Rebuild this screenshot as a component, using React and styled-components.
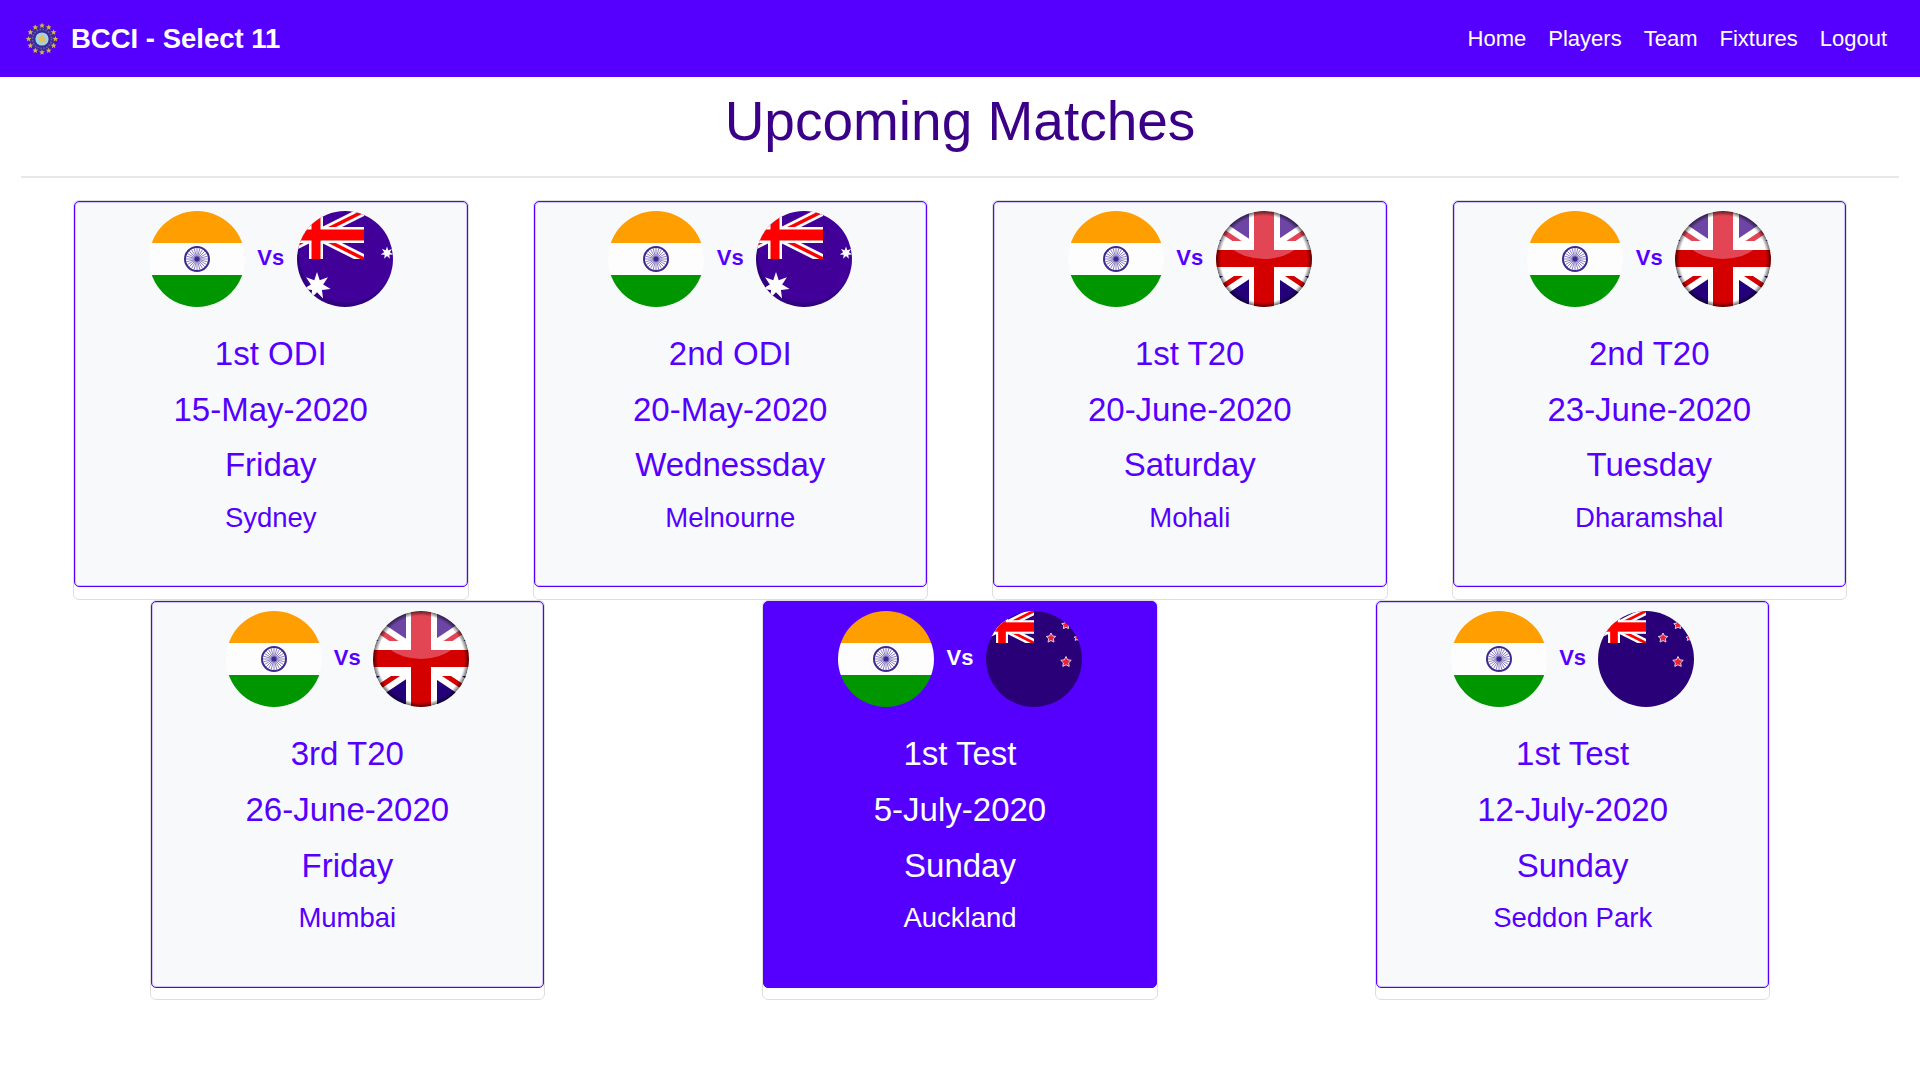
import React from "react";
import styled, { createGlobalStyle } from "styled-components";

const Global = createGlobalStyle`
  html, body { margin: 0; padding: 0; background: #fff; }
  body { font-family: "Liberation Sans", Arial, sans-serif; }
`;
const Nav = styled.nav`
  height: 77px; background: #5500ff; display: flex; align-items: center;
  justify-content: space-between; padding: 0 33px 0 26px; box-sizing: border-box;
`;
const Brand = styled.a`
  display: flex; align-items: center; gap: 13px; color: #fff; font-weight: 700; font-size: 27.5px;
`;
const Links = styled.div`display: flex; gap: 22px;`;
const Link = styled.a`color: #fff; font-size: 22px;`;
const Title = styled.h1`
  margin: 0; height: 99px; box-sizing: border-box; padding-top: 10.5px; text-align: center;
  font-weight: 400; font-size: 55px; line-height: 67px; color: #3a0088;
`;
const Rule = styled.hr`margin: 0 21px; border: 0; border-top: 2px solid #e8e8e8;`;
const Grid = styled.div`padding: 21.8px 41px 0;`;
const Row = styled.div`display: grid; grid-template-columns: repeat(${p => p.$cols}, 1fr);`;
const Cell = styled.div`display: flex; justify-content: center;`;
const Outer = styled.div`
  width: 395.5px; height: 400.3px; box-sizing: border-box; border: 1px solid #dedede; border-radius: 6px; background: #fff;
`;
const Inner = styled.div`
  height: 386.5px; box-sizing: border-box; padding-top: 8.4px; text-align: center; border-radius: 5px;
  background: ${p => p.$active ? "#5500ff" : "#f8f9fa"};
  border: 1px solid #5500ff;
  box-shadow: inset 0 0 0 1px rgba(85, 0, 255, 0.22);
  color: ${p => p.$active ? "#fff" : "#5500ff"};
`;
const Flags = styled.div`display: flex; justify-content: center; align-items: center; gap: 12.3px; height: 97px;`;
const Vs = styled.b`font-size: 22px; position: relative; top: -1px;`;
const Line = styled.div`font-size: ${p => p.$small ? "27.5px" : "33px"}; line-height: ${p => p.$small ? "50px" : "55.6px"};`;
const Lines = styled.div`padding-top: 19px;`;
const Gloss = styled.rect`mix-blend-mode: lighten;`;

const star = (cx, cy, r, n, inner = 0.45) => {
  let d = "";
  for (let i = 0; i < n * 2; i++) {
    const a = -Math.PI / 2 + (i * Math.PI) / n;
    const rr = i % 2 ? r * inner : r;
    d += `${i ? "L" : "M"}${(cx + rr * Math.cos(a)).toFixed(2)} ${(cy + rr * Math.sin(a)).toFixed(2)}`;
  }
  return d + "Z";
};

const Jack = ({ x, y, w, h, t = 1 }) => {
  const cx = x + w / 2, cy = y + h / 2;
  return (
    <svg x={x} y={y} width={w} height={h} viewBox={`${x} ${y} ${w} ${h}`}>
      <path d={`M${x} ${y}L${x + w} ${y + h}M${x + w} ${y}L${x} ${y + h}`} stroke="#fff" strokeWidth={9 * t} />
      <path d={`M${x} ${y}L${x + w} ${y + h}M${x + w} ${y}L${x} ${y + h}`} stroke="#f00" strokeWidth={3.4 * t} />
      <rect x={x} y={cy - 8 * t} width={w} height={16 * t} fill="#fff" />
      <rect x={cx - 7 * t} y={y} width={14 * t} height={h} fill="#fff" />
      <rect x={x} y={cy - 5.5 * t} width={w} height={11 * t} fill="#f00" />
      <rect x={cx - 4.5 * t} y={y} width={9 * t} height={h} fill="#f00" />
    </svg>
  );
};

const India = () => (
  <svg width="96" height="96" viewBox="0 0 96 96">
    <defs><clipPath id="c-in"><circle cx="48" cy="48" r="48" /></clipPath></defs>
    <g clipPath="url(#c-in)">
      <rect width="96" height="32" fill="#ff9e00" />
      <rect y="32" width="96" height="32" fill="#fdfdfd" />
      <rect y="64" width="96" height="32" fill="#009600" />
    </g>
    <circle cx="48" cy="48" r="12" fill="#fff" stroke="#3d2a8f" strokeWidth="2" />
    {Array.from({ length: 24 }, (_, i) => {
      const a = (i * Math.PI) / 12;
      return <line key={i} x1="48" y1="48" x2={48 + 11 * Math.cos(a)} y2={48 + 11 * Math.sin(a)} stroke="#5a48a8" strokeWidth="0.7" />;
    })}
    <circle cx="48" cy="48" r="2.5" fill="#3d2a8f" />
  </svg>
);

const Australia = () => (
  <svg width="96" height="96" viewBox="0 0 96 96">
    <defs>
      <clipPath id="c-au"><circle cx="48" cy="48" r="48" /></clipPath>
      <radialGradient id="g-au" cx="0.52" cy="0.46" r="0.54">
        <stop offset="0" stopColor="#400096" />
        <stop offset="0.9" stopColor="#42009a" />
        <stop offset="0.93" stopColor="#300080" />
        <stop offset="1" stopColor="#300080" />
      </radialGradient>
    </defs>
    <g clipPath="url(#c-au)">
      <rect width="96" height="96" fill="url(#g-au)" />
      <Jack x={-29} y={0} w={96} h={48} />
      <path d={star(20, 75, 14, 7)} fill="#fff" />
      <path d={star(90, 42, 6.5, 7)} fill="#fff" />
    </g>
  </svg>
);

const Britain = () => (
  <svg width="96" height="96" viewBox="0 0 96 96">
    <defs>
      <clipPath id="c-uk"><circle cx="48" cy="48" r="48" /></clipPath>
      <clipPath id="c-gl"><ellipse cx="48" cy="12" rx="46" ry="36" /></clipPath>
      <radialGradient id="g-uk" cx="0.5" cy="0.5" r="0.5">
        <stop offset="0.9" stopColor="#000" stopOpacity="0" />
        <stop offset="1" stopColor="#000" stopOpacity="0.6" />
      </radialGradient>
    </defs>
    <g clipPath="url(#c-uk)">
      <rect width="96" height="96" fill="#24007a" />
      <path d="M-24 0L120 96M120 0L-24 96" stroke="#fff" strokeWidth="17" />
      <path d="M-24 0L120 96M120 0L-24 96" stroke="#d40000" strokeWidth="5" />
      <rect y="30" width="96" height="35" fill="#fff" />
      <rect x="33" width="31" height="96" fill="#fff" />
      <rect y="39" width="96" height="17" fill="#d40000" />
      <rect x="38" width="20" height="96" fill="#d40000" />
      <Gloss width="96" height="48" fill="#ffd1ff" fillOpacity="0.33" clipPath="url(#c-gl)" />
      <circle cx="48" cy="48" r="48" fill="url(#g-uk)" />
    </g>
  </svg>
);

const NZ = () => (
  <svg width="96" height="96" viewBox="0 0 96 96">
    <defs><clipPath id="c-nz"><circle cx="48" cy="48" r="48" /></clipPath></defs>
    <g clipPath="url(#c-nz)">
      <rect width="96" height="96" fill="#2a0078" />
      <Jack x={-16} y={0} w={64} h={32} t={0.85} />
      {[[65, 27, 5], [80, 14, 4.5], [80, 51, 5.5], [91, 27, 3]].map(([x, y, r]) => (
        <path key={`${x}-${y}`} d={star(x, y, r, 5, 0.5)} fill="#f02030" stroke="#d8cfe8" strokeWidth="1" />
      ))}
    </g>
  </svg>
);

const Logo = () => (
  <svg width="32" height="32" viewBox="0 0 32 32">
    <circle cx="16" cy="16" r="13.5" fill="#3d2a9a" />
    {Array.from({ length: 12 }, (_, i) => {
      const a = (i * 2 * Math.PI) / 12;
      return <path key={i} d={star(16 + 13.4 * Math.cos(a), 16 + 13.4 * Math.sin(a), 3, 5)} fill="#d9b04a" />;
    })}
    <circle cx="16" cy="16" r="9.5" fill="none" stroke="#6a5fb0" strokeWidth="1.6" strokeDasharray="1.5 1.5" />
    <circle cx="16" cy="16" r="6.6" fill="#9fd4ee" />
    <path d={star(16, 16, 5.2, 5, 0.55)} fill="#e6c25e" />
  </svg>
);

const FLAGS = { au: Australia, uk: Britain, nz: NZ };

const Match = ({ flag, name, date, day, venue, active }) => {
  const Opp = FLAGS[flag];
  return (
    <Cell>
      <Outer>
        <Inner $active={active}>
          <Flags>
            <India />
            <Vs>Vs</Vs>
            <Opp />
          </Flags>
          <Lines>
            <Line>{name}</Line>
            <Line>{date}</Line>
            <Line>{day}</Line>
            <Line $small>{venue}</Line>
          </Lines>
        </Inner>
      </Outer>
    </Cell>
  );
};

const top = [
  { flag: "au", name: "1st ODI", date: "15-May-2020", day: "Friday", venue: "Sydney" },
  { flag: "au", name: "2nd ODI", date: "20-May-2020", day: "Wednessday", venue: "Melnourne" },
  { flag: "uk", name: "1st T20", date: "20-June-2020", day: "Saturday", venue: "Mohali" },
  { flag: "uk", name: "2nd T20", date: "23-June-2020", day: "Tuesday", venue: "Dharamshal" },
];
const bottom = [
  { flag: "uk", name: "3rd T20", date: "26-June-2020", day: "Friday", venue: "Mumbai" },
  { flag: "nz", name: "1st Test", date: "5-July-2020", day: "Sunday", venue: "Auckland", active: true },
  { flag: "nz", name: "1st Test", date: "12-July-2020", day: "Sunday", venue: "Seddon Park" },
];

export default function App() {
  return (
    <>
      <Global />
      <Nav>
        <Brand><Logo />BCCI - Select 11</Brand>
        <Links>
          {["Home", "Players", "Team", "Fixtures", "Logout"].map(l => <Link key={l}>{l}</Link>)}
        </Links>
      </Nav>
      <Title>Upcoming Matches</Title>
      <Rule />
      <Grid>
        <Row $cols={4}>{top.map(m => <Match key={m.date} {...m} />)}</Row>
        <Row $cols={3}>{bottom.map(m => <Match key={m.date} {...m} />)}</Row>
      </Grid>
    </>
  );
}
